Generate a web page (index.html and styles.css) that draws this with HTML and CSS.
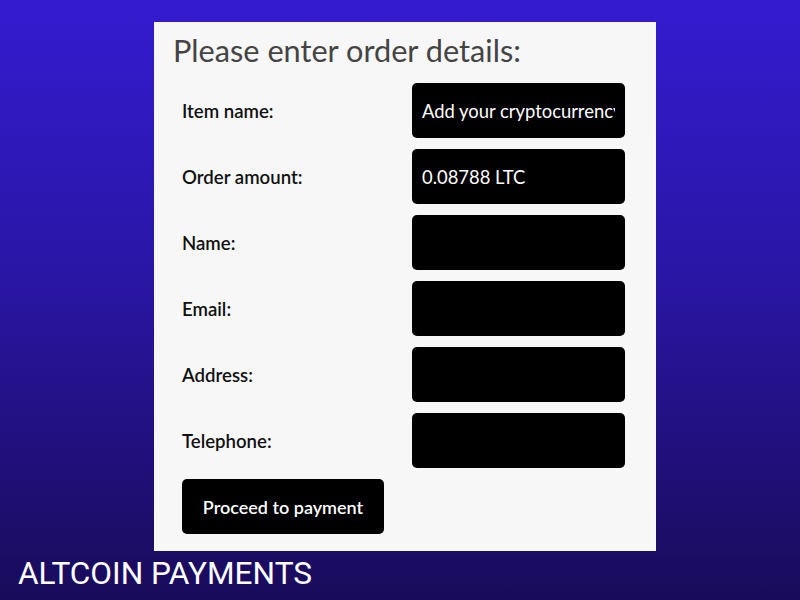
FILE: index.html
```html
<!DOCTYPE html>
<html>
<head>
<meta charset="utf-8">
<link rel="stylesheet" href="styles.css">
</head>
<body>
<div class="page">
  <div class="card">
    <h1 class="title">Please enter order details:</h1>
    <form class="form">
      <label class="label">Item name:</label>
      <input class="field" type="text" value="Add your cryptocurrency item">
      <label class="label">Order amount:</label>
      <input class="field" type="text" value="0.08788 LTC">
      <label class="label">Name:</label>
      <input class="field" type="text">
      <label class="label">Email:</label>
      <input class="field" type="text">
      <label class="label">Address:</label>
      <input class="field" type="text">
      <label class="label">Telephone:</label>
      <input class="field" type="text">
      <button class="submit" type="button">Proceed to payment</button>
    </form>
  </div>
  <div class="footer">ALTCOIN PAYMENTS</div>
</div>
</body>
</html>
```

FILE: styles.css
```css
html, body {
  margin: 0;
  padding: 0;
}
body {
  width: 800px;
  height: 600px;
  overflow: hidden;
  background: linear-gradient(180deg, #351bd0 0%, #2a16a6 45%, #190b5a 100%);
  font-family: "Lato", "Liberation Sans", sans-serif;
}
.page {
  padding-top: 22px;
}
.card {
  margin-left: 154px;
  width: 502px;
  box-sizing: border-box;
  background: #f7f7f7;
  padding: 9px 31px 17px 19px;
}
.title {
  margin: 0 0 12px 0;
  font-family: "Lato", sans-serif;
  font-weight: 400;
  font-size: 30.7px;
  line-height: 40px;
  color: #444444;
}
.form {
  margin-left: 9px;
  display: grid;
  grid-template-columns: 230px 213px;
  row-gap: 11px;
  align-items: center;
}
.label {
  font-size: 18.6px;
  font-weight: 600;
  color: #111111;
}
.field {
  box-sizing: border-box;
  width: 213px;
  height: 55px;
  border: none;
  border-radius: 5px;
  background: #000000;
  color: #ffffff;
  font-family: "Lato", sans-serif;
  font-size: 18.4px;
  padding: 0 10px;
  outline: none;
}
.submit {
  box-sizing: border-box;
  width: 202px;
  height: 55px;
  border: none;
  border-radius: 5px;
  background: #000000;
  color: #ffffff;
  font-family: "Lato", sans-serif;
  font-size: 18px;
  font-weight: 600;
  padding: 0;
}
.footer {
  margin-top: 5px;
  padding-left: 18px;
  font-family: "Roboto", sans-serif;
  font-size: 31.6px;
  line-height: 36px;
  color: #ffffff;
}
```
